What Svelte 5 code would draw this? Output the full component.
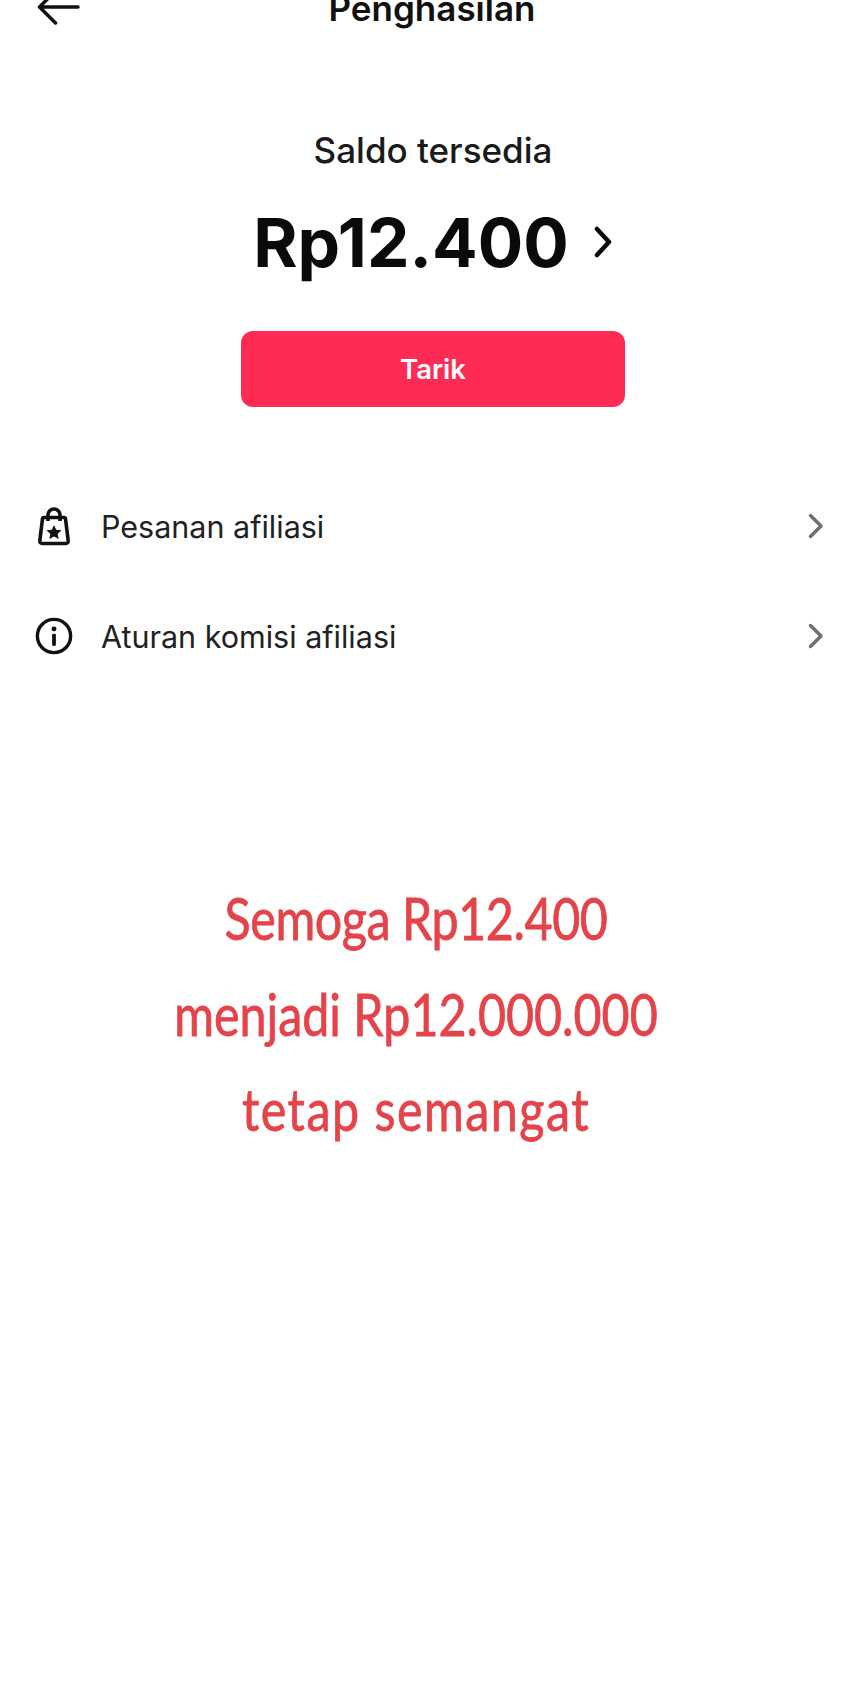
<script>
	const rows = [
		{ label: 'Pesanan afiliasi', icon: 'bag' },
		{ label: 'Aturan komisi afiliasi', icon: 'info' }
	];
	const wishes = ['Semoga Rp12.400', 'menjadi Rp12.000.000', 'tetap semangat'];
</script>

<div class="page">
	<header class="topbar">
		<svg class="back" viewBox="0 0 44 44" aria-hidden="true">
			<path d="M41 7H2.500M18.500-9 2.500 7l16 16" />
		</svg>
		<h1>Penghasilan</h1>
	</header>

	<section class="balance">
		<p class="caption">Saldo tersedia</p>
		<div class="amount">
			<span>Rp12.400</span>
			<svg viewBox="0 0 20 34" aria-hidden="true"><path d="M4 4l12 13L4 30" /></svg>
		</div>
		<button class="withdraw">Tarik</button>
	</section>

	<ul class="menu">
		{#each rows as row}
			<li>
				{#if row.icon === 'bag'}
					<svg class="icon" viewBox="0 0 36 40" aria-hidden="true">
						<path class="line" d="M8 11.500h20a1.500 1.500 0 0 1 1.500 1.300l2.700 22a2.300 2.300 0 0 1-2.300 2.700H6.100a2.300 2.300 0 0 1-2.300-2.700l2.700-22A1.500 1.500 0 0 1 8 11.500Z" />
						<path class="line" d="M12 15V9a6 6 0 0 1 12 0v6" />
						<path class="fill" d="m18 19 2.200 4.700 5.300.6-3.900 3.600 1.100 5.100-4.700-2.600-4.700 2.600 1.100-5.100-3.900-3.600 5.300-.6Z" />
					</svg>
				{:else}
					<svg class="icon" viewBox="0 0 40 40" aria-hidden="true">
						<circle class="line" cx="20" cy="20" r="17.500" />
						<circle class="fill" cx="20" cy="12.500" r="2.600" />
						<rect class="fill" x="18" y="17.500" width="4" height="13" rx="1.500" />
					</svg>
				{/if}
				<span class="label">{row.label}</span>
				<svg class="chevron" viewBox="0 0 16 26" aria-hidden="true"><path d="M2.500 2.500 13 13 2.500 23.500" /></svg>
			</li>
		{/each}
	</ul>

	<div class="wishes">
		{#each wishes as line}
			<p>{line}</p>
		{/each}
	</div>
</div>

<style>
	:global(body) {
		margin: 0;
		background: #fff;
	}

	.page {
		width: 864px;
		height: 1688px;
		overflow: hidden;
		background: #fff;
		font-family: 'Inter', 'Liberation Sans', sans-serif;
		color: #111;
	}

	.topbar {
		position: relative;
		height: 27px;
		display: flex;
		align-items: flex-end;
		justify-content: center;
	}

	.back {
		position: absolute;
		left: 37px;
		top: 0;
		width: 44px;
		height: 44px;
		fill: none;
		stroke: #111;
		stroke-width: 3.500;
		stroke-linecap: round;
		stroke-linejoin: round;
	}

	h1 {
		margin: 0;
		font-size: 35px;
		line-height: 38px;
		font-weight: 600;
		white-space: nowrap;
	}

	.balance {
		display: flex;
		flex-direction: column;
		align-items: center;
		padding: 102px 0 0 2px;
	}

	.caption {
		margin: 0;
		font-size: 35px;
		line-height: 42px;
		font-weight: 500;
		color: #1a1a1a;
	}

	.amount {
		display: flex;
		align-items: center;
		gap: 23px;
		margin-top: 32px;
		padding-left: 1px;
		height: 78px;
		font-size: 67.500px;
		font-weight: 700;
		color: #0a0a0a;
	}

	.amount svg {
		width: 22px;
		height: 34px;
		fill: none;
		stroke: #0a0a0a;
		stroke-width: 4.500;
		stroke-linecap: round;
		stroke-linejoin: round;
	}

	.withdraw {
		width: 384px;
		height: 76px;
		margin-top: 50px;
		border: 0;
		border-radius: 12px;
		background: #fe2c55;
		color: #fff;
		font-family: inherit;
		font-size: 27.500px;
		font-weight: 600;
	}

	.menu {
		list-style: none;
		margin: 93px 0 0;
		padding: 0 24px 0 35px;
		display: flex;
		flex-direction: column;
		gap: 58px;
	}

	.menu li {
		display: flex;
		align-items: center;
		height: 52px;
	}

	.icon {
		width: 38px;
		height: 40px;
		flex: none;
	}

	.line {
		fill: none;
		stroke: #111;
		stroke-width: 3.600;
		stroke-linejoin: round;
	}

	.fill {
		fill: #111;
	}

	.label {
		flex: 1;
		margin-left: 28px;
		font-size: 30.500px;
		font-weight: 400;
		color: #222;
	}

	.chevron {
		width: 16px;
		height: 26px;
		margin-right: 16px;
		fill: none;
		stroke: #6f6f6f;
		stroke-width: 3.500;
		stroke-linecap: round;
		stroke-linejoin: round;
	}

	.wishes {
		margin-top: 208px;
		padding-right: 32px;
		text-align: center;
		font-family: 'Lato', 'Noto Sans', sans-serif;
		font-size: 58px;
		line-height: 95.500px;
		font-weight: 400;
		color: #e5434a;
		-webkit-text-stroke: 0.800px #e5434a;
	}

	.wishes p {
		margin: 0;
		white-space: nowrap;
		transform: scaleX(0.834);
	}

	.wishes p:nth-child(1) {
		letter-spacing: -0.500px;
	}

	.wishes p:nth-child(3) {
		letter-spacing: 1.800px;
	}
</style>
